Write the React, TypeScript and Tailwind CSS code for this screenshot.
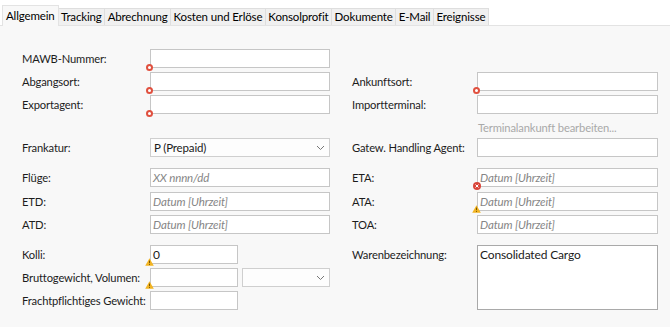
import type { ReactNode } from 'react'

const tabs = [
  'Allgemein',
  'Tracking',
  'Abrechnung',
  'Kosten und Erlöse',
  'Konsolprofit',
  'Dokumente',
  'E-Mail',
  'Ereignisse',
]

type Marker = 'error' | 'errorX' | 'warn' | undefined

function MarkerIcon({ kind }: { kind: Marker }) {
  if (kind === 'error')
    return (
      <span className="absolute -bottom-[3px] -left-[4px] h-[7px] w-[7px] rounded-full border-2 border-[#e0503f] bg-white" />
    )
  if (kind === 'errorX')
    return (
      <svg className="absolute -bottom-[3px] -left-[4px]" width="8" height="8" viewBox="0 0 8 8">
        <circle cx="4" cy="4" r="4" fill="#d9453a" />
        <path d="M2.5 2.5l3 3M5.5 2.5l-3 3" stroke="#fff" strokeWidth="1" />
      </svg>
    )
  if (kind === 'warn')
    return (
      <svg className="absolute -bottom-[2px] -left-[5px]" width="9" height="8" viewBox="0 0 9 8">
        <path d="M4.5 0.3L8.8 7.7H0.2Z" fill="#f2b422" />
        <path d="M4.5 2.6v2.6M4.5 6v0.9" stroke="#6b4a00" strokeWidth="0.9" />
      </svg>
    )
  return null
}

function Input({
  placeholder,
  value,
  marker,
  className = 'w-full',
}: {
  placeholder?: string
  value?: string
  marker?: Marker
  className?: string
}) {
  return (
    <div className={`relative h-[19px] ${className}`}>
      <div className="flex h-full items-center border border-[#c6c6c6] bg-white px-[2px]">
        {value ? (
          <span className="text-[12px] text-[#1a1a1a]">{value}</span>
        ) : placeholder ? (
          <span className="text-[11.5px] italic text-[#858585]">{placeholder}</span>
        ) : null}
      </div>
      <MarkerIcon kind={marker} />
    </div>
  )
}

function Select({ value, className = 'w-full' }: { value?: string; className?: string }) {
  return (
    <div className={`flex h-[19px] items-center justify-between border border-[#cfcfcf] bg-[#fdfdfd] px-[3px] ${className}`}>
      <span className="text-[11.5px] text-[#1a1a1a]">{value}</span>
      <svg width="9" height="6" viewBox="0 0 9 6" className="mr-[1px]">
        <path d="M1 1l3.5 3.5L8 1" fill="none" stroke="#777" strokeWidth="1" />
      </svg>
    </div>
  )
}

function Label({ children }: { children?: ReactNode }) {
  return <div className="flex h-[19px] items-center whitespace-nowrap text-[#1c1c1c]">{children}</div>
}

function Row({
  h = 'h-[23px]',
  left,
  leftLabel,
  right,
  rightLabel,
}: {
  h?: string
  left?: ReactNode
  leftLabel?: string
  right?: ReactNode
  rightLabel?: string
}) {
  return (
    <div className={`grid grid-cols-[128px_180px_22px_125px_181px] ${h}`}>
      <Label>{leftLabel}</Label>
      <div>{left}</div>
      <div />
      <Label>{rightLabel}</Label>
      <div>{right}</div>
    </div>
  )
}

export default function App() {
  return (
    <div
      className="h-[327px] w-[670px] overflow-hidden bg-white text-[11.2px] leading-none tracking-[-0.15px]"
      style={{ fontFamily: 'Lato, "Noto Sans", sans-serif' }}
    >
      <div className="flex h-[25px] items-end pl-[2px]">
        {tabs.map((t, i) =>
          i === 0 ? (
            <div
              key={t}
              className="relative z-10 -mb-px flex h-[21px] items-center border border-b-0 border-[#e3e3e3] bg-[#f8f8f8] px-[3px] text-[11.5px] text-black"
            >
              {t}
            </div>
          ) : (
            <div
              key={t}
              className="flex h-[17px] items-center border border-l-0 border-b-0 border-[#dedede] bg-[#f0f0f0] px-[2.5px] text-[11.5px] text-black"
            >
              {t}
            </div>
          ),
        )}
      </div>
      <div className="h-[302px] border-t border-[#e3e3e3] bg-[#f8f8f8] pl-[22px] pt-[23px]">
        <Row leftLabel="MAWB-Nummer:" left={<Input marker="error" />} />
        <Row
          leftLabel="Abgangsort:"
          left={<Input marker="error" />}
          rightLabel="Ankunftsort:"
          right={<Input marker="error" />}
        />
        <Row
          leftLabel="Exportagent:"
          left={<Input marker="error" />}
          rightLabel="Importterminal:"
          right={<Input />}
        />
        <div className="grid h-[20px] grid-cols-[128px_180px_22px_125px_181px]">
          <div />
          <div />
          <div />
          <div />
          <div className="flex items-center pl-[1px] text-[#a9a9a9]">Terminalankunft bearbeiten...</div>
        </div>
        <Row
          h="h-[30px]"
          leftLabel="Frankatur:"
          left={<Select value="P (Prepaid)" />}
          rightLabel="Gatew. Handling Agent:"
          right={<Input />}
        />
        <Row
          h="h-[24px]"
          leftLabel="Flüge:"
          left={<Input placeholder="XX nnnn/dd" />}
          rightLabel="ETA:"
          right={<Input placeholder="Datum [Uhrzeit]" marker="errorX" />}
        />
        <Row
          leftLabel="ETD:"
          left={<Input placeholder="Datum [Uhrzeit]" />}
          rightLabel="ATA:"
          right={<Input placeholder="Datum [Uhrzeit]" marker="warn" />}
        />
        <Row
          h="h-[30px]"
          leftLabel="ATD:"
          left={<Input placeholder="Datum [Uhrzeit]" />}
          rightLabel="TOA:"
          right={<Input placeholder="Datum [Uhrzeit]" />}
        />
        <div className="grid grid-cols-[128px_180px_22px_125px_181px]">
          <div className="flex flex-col gap-[4px]">
            <Label>Kolli:</Label>
            <Label>Bruttogewicht, Volumen:</Label>
            <Label>Frachtpflichtiges Gewicht:</Label>
          </div>
          <div className="flex flex-col gap-[4px]">
            <Input value="0" marker="warn" className="w-[88px]" />
            <div className="flex gap-[4px]">
              <Input marker="warn" className="w-[88px]" />
              <Select className="w-[88px]" />
            </div>
            <Input className="w-[88px]" />
          </div>
          <div />
          <Label>Warenbezeichnung:</Label>
          <div className="h-[65px] border border-[#a9a9a9] bg-white px-[2px] pt-[3px] text-[12px] text-[#1a1a1a]">
            Consolidated Cargo
          </div>
        </div>
      </div>
    </div>
  )
}
